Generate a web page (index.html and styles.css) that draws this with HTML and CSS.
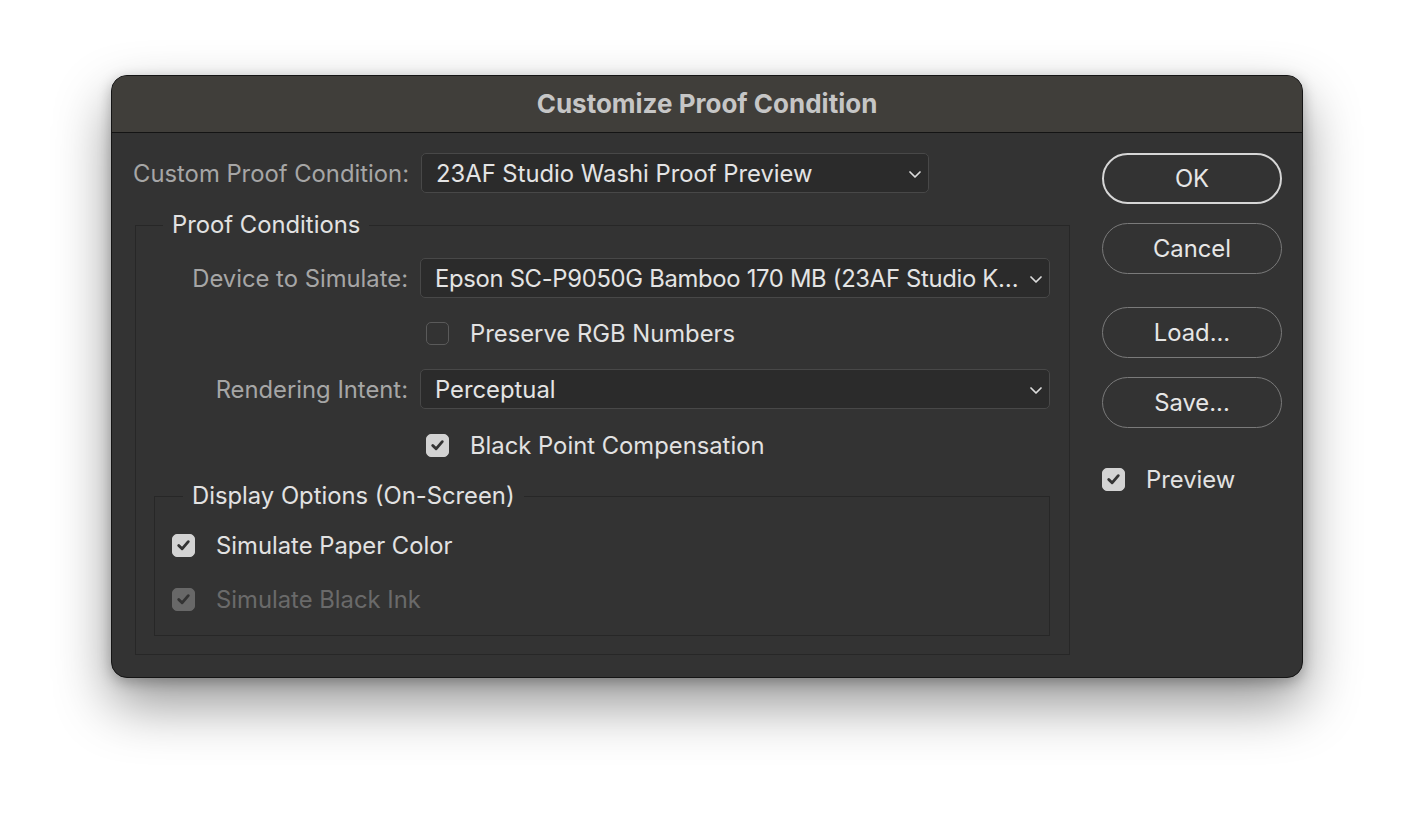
FILE: index.html
```html
<!DOCTYPE html>
<html lang="en">
<head>
<meta charset="utf-8">
<title>Customize Proof Condition</title>
<link rel="stylesheet" href="styles.css">
</head>
<body>
<div class="stage">
  <div class="window">
    <div class="titlebar">Customize Proof Condition</div>
    <div class="content">
      <div class="left">
        <div class="row top-row">
          <div class="label label-wide">Custom Proof Condition:</div>
          <div class="select select-short">
            <span class="select-text">23AF Studio Washi Proof Preview</span>
            <svg class="chev" width="12" height="7" viewBox="0 0 12 7"><polyline points="1,1 6,6 11,1" fill="none" stroke="#dcdcdc" stroke-width="1.7" stroke-linecap="round" stroke-linejoin="round"/></svg>
          </div>
        </div>

        <fieldset class="group outer">
          <legend class="legend outer-legend">Proof Conditions</legend>
          <div class="rows">
            <div class="row">
              <div class="label">Device to Simulate:</div>
              <div class="select select-long">
                <span class="select-text tight">Epson SC-P9050G Bamboo 170 MB (23AF Studio K…</span>
                <svg class="chev" width="12" height="7" viewBox="0 0 12 7"><polyline points="1,1 6,6 11,1" fill="none" stroke="#dcdcdc" stroke-width="1.7" stroke-linecap="round" stroke-linejoin="round"/></svg>
              </div>
            </div>
            <div class="row">
              <div class="label"></div>
              <div class="check-row indent">
                <span class="box"></span>
                <span class="check-label">Preserve RGB Numbers</span>
              </div>
            </div>
            <div class="row">
              <div class="label">Rendering Intent:</div>
              <div class="select select-long">
                <span class="select-text">Perceptual</span>
                <svg class="chev" width="12" height="7" viewBox="0 0 12 7"><polyline points="1,1 6,6 11,1" fill="none" stroke="#dcdcdc" stroke-width="1.7" stroke-linecap="round" stroke-linejoin="round"/></svg>
              </div>
            </div>
            <div class="row">
              <div class="label"></div>
              <div class="check-row indent">
                <span class="box checked"><svg width="22" height="22" viewBox="0 0 22 22"><polyline points="6,11.5 9.5,15 16,7.5" fill="none" stroke="#333" stroke-width="3" stroke-linecap="round" stroke-linejoin="round"/></svg></span>
                <span class="check-label">Black Point Compensation</span>
              </div>
            </div>
          </div>

          <fieldset class="group inner">
            <legend class="legend inner-legend">Display Options (On-Screen)</legend>
            <div class="rows inner-rows">
              <div class="check-row">
                <span class="box checked"><svg width="22" height="22" viewBox="0 0 22 22"><polyline points="6,11.5 9.5,15 16,7.5" fill="none" stroke="#333" stroke-width="3" stroke-linecap="round" stroke-linejoin="round"/></svg></span>
                <span class="check-label">Simulate Paper Color</span>
              </div>
              <div class="check-row disabled">
                <span class="box checked"><svg width="22" height="22" viewBox="0 0 22 22"><polyline points="6,11.5 9.5,15 16,7.5" fill="none" stroke="#333" stroke-width="3" stroke-linecap="round" stroke-linejoin="round"/></svg></span>
                <span class="check-label">Simulate Black Ink</span>
              </div>
            </div>
          </fieldset>
        </fieldset>
      </div>

      <div class="right">
        <button class="btn default">OK</button>
        <button class="btn">Cancel</button>
        <button class="btn spaced">Load...</button>
        <button class="btn">Save...</button>
        <div class="check-row preview">
          <span class="box checked"><svg width="22" height="22" viewBox="0 0 22 22"><polyline points="6,11.5 9.5,15 16,7.5" fill="none" stroke="#333" stroke-width="3" stroke-linecap="round" stroke-linejoin="round"/></svg></span>
          <span class="check-label">Preview</span>
        </div>
      </div>
    </div>
  </div>
</div>
</body>
</html>
```

FILE: styles.css
```css
* { box-sizing: border-box; }

html, body {
  margin: 0;
  padding: 0;
  background: #ffffff;
}

body {
  font-family: "Inter", "Liberation Sans", Arial, sans-serif;
  font-size: 23.8px;
  color: #e2e2e2;
}

.stage {
  padding: 75px 0 0 111px;
  height: 826px;
}

.window {
  width: 1192px;
  height: 603px;
  border: 1px solid #151515;
  border-radius: 16px;
  background: #333333;
  overflow: hidden;
  box-shadow: 0 26px 55px rgba(0, 0, 0, 0.42), 0 4px 14px rgba(0, 0, 0, 0.25);
}

.titlebar {
  height: 57px;
  background: #403e3a;
  border-bottom: 1px solid #141414;
  display: flex;
  align-items: center;
  justify-content: center;
  font-weight: 700;
  font-size: 26px;
  color: #c6c6c6;
  padding-bottom: 2px;
}

.content {
  display: flex;
  padding: 20px 19px 0 21px;
  gap: 32px;
}

.left {
  width: 937px;
  display: flex;
  flex-direction: column;
}

.row {
  display: flex;
  align-items: center;
  gap: 12px;
  height: 40px;
}

.label {
  width: 254px;
  text-align: right;
  color: #a6a6a6;
  white-space: nowrap;
}

.label-wide {
  width: 276px;
}

.select {
  height: 40px;
  background: #2b2b2b;
  border: 1.5px solid #484848;
  border-radius: 5px;
  display: flex;
  align-items: center;
  justify-content: space-between;
  gap: 8px;
  padding: 0 7px 0 14px;
  color: #e4e4e4;
  white-space: nowrap;
}

.select-text {
  overflow: hidden;
}

.tight { letter-spacing: -0.3px; }

.select-short { width: 508px; }
.select-long { width: 630px; }

.chev { flex: none; margin-top: 2px; }

.group {
  margin: 0;
  border: 1.5px solid #272727;
  min-width: 0;
}

.outer {
  margin: 19px 0 0 2px;
  width: 935px;
  height: 443px;
  padding: 6px 18px 0 18px;
}

.legend {
  padding: 0 9px;
  color: #e2e2e2;
  line-height: 26px;
}

.outer-legend { margin-left: 9px; }

.rows {
  display: flex;
  flex-direction: column;
  gap: 16px;
}

.outer > .rows > .row:first-child { margin-top: 14px; }
.outer > .rows > .row:nth-child(2) { margin-top: -1px; }

.check-row {
  display: flex;
  align-items: center;
  gap: 21px;
  height: 40px;
  color: #e2e2e2;
}

.indent { margin-left: 6px; }

.box {
  width: 23px;
  height: 23px;
  border-radius: 5px;
  border: 1.5px solid #5a5a5a;
  background: transparent;
  flex: none;
  display: flex;
  align-items: center;
  justify-content: center;
}

.box.checked {
  background: #d3d3d3;
  border-color: #d3d3d3;
}

.box svg { display: block; }

.disabled .check-label { color: #6a6a6a; }
.disabled .box.checked { background: #686868; border-color: #686868; }

.inner {
  margin: 18px 0 0 0;
  width: 896px;
  height: 153px;
  padding: 4px 17px 0 17px;
}

.inner-legend { margin-left: 11px; }

.inner-rows {
  gap: 14px;
  margin-top: 12px;
}

.right {
  width: 180px;
  display: flex;
  flex-direction: column;
}

.btn {
  width: 180px;
  height: 51px;
  border-radius: 26px;
  border: 1.5px solid #7a7a7a;
  background: transparent;
  color: #e6e6e6;
  font-family: inherit;
  font-size: 23.8px;
  padding: 0;
  margin: 0 0 19px 0;
  display: flex;
  align-items: center;
  justify-content: center;
}

.btn.default {
  border: 2px solid #d6d6d6;
}

.btn.spaced { margin-top: 14px; }

.preview {
  margin-top: 12px;
  gap: 21px;
}
```
